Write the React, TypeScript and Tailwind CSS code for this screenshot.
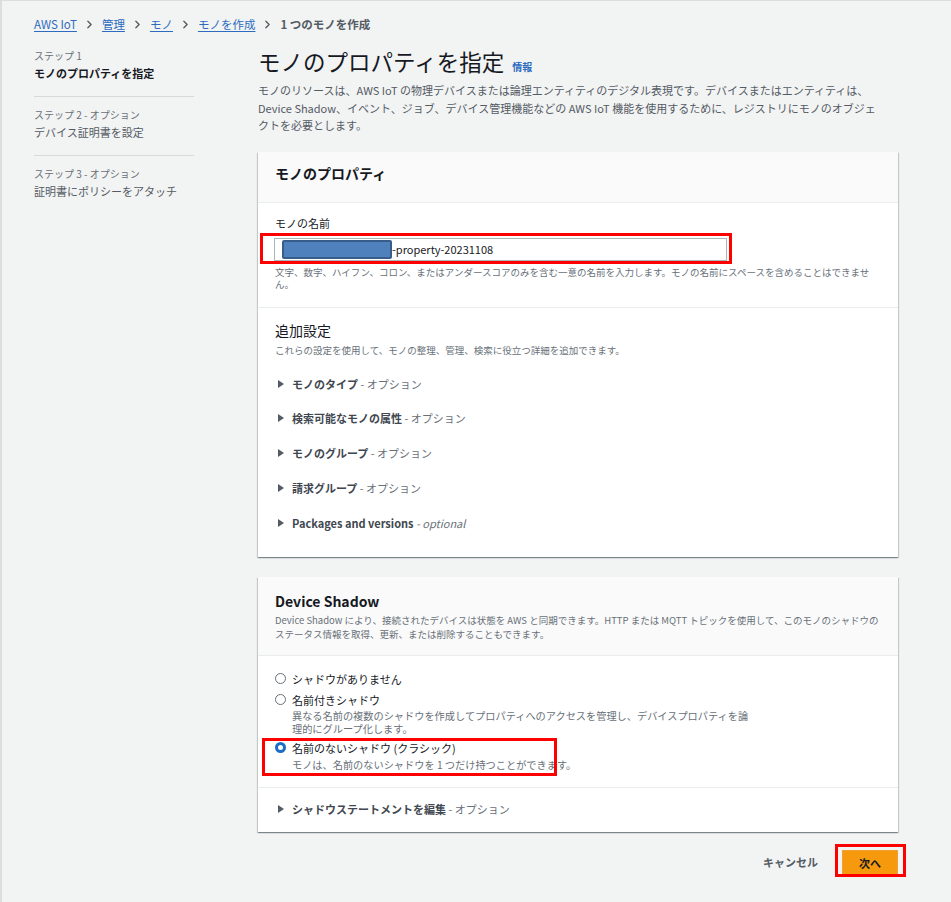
import { ChevronRight } from "lucide-react"

const crumbs = ["AWS IoT", "管理", "モノ", "モノを作成"]

const steps = [
    { step: "ステップ 1", title: "モノのプロパティを指定", active: true },
    { step: "ステップ 2 - オプション", title: "デバイス証明書を設定", active: false },
    { step: "ステップ 3 - オプション", title: "証明書にポリシーをアタッチ", active: false },
]

const extras = [
    { label: "モノのタイプ", note: "オプション", italic: false },
    { label: "検索可能なモノの属性", note: "オプション", italic: false },
    { label: "モノのグループ", note: "オプション", italic: false },
    { label: "請求グループ", note: "オプション", italic: false },
    { label: "Packages and versions", note: "optional", italic: true },
]

function Caret() {
    return <span className="w-0 h-0 border-y-[4px] border-y-transparent border-l-[6px] border-l-[#545b64] shrink-0" />
}

function ExpandRow({ label, note, italic }: { label: string; note: string; italic: boolean }) {
    return (
        <div className="flex items-center gap-[8px] pl-[3px] h-[16px] text-[11px] leading-[16px]">
            <Caret />
            <span>
                <span className="font-bold text-[#414750]">{label}</span>
                <span className={`text-[#687078] ${italic ? "italic" : ""}`}> - {note}</span>
            </span>
        </div>
    )
}

function Radio({ checked }: { checked?: boolean }) {
    return checked ? (
        <span className="mt-[3.5px] w-[11px] h-[11px] rounded-full border-[3.5px] border-[#1a6ec8] bg-white shrink-0" />
    ) : (
        <span className="mt-[3.5px] w-[11px] h-[11px] rounded-full border-[1.5px] border-[#687078] bg-white shrink-0" />
    )
}

const cardShadow =
    "shadow-[0_1px_1px_0_rgba(0,28,36,0.3),1px_1px_1px_0_rgba(0,28,36,0.15),-1px_1px_1px_0_rgba(0,28,36,0.15)]"

export default function App() {
    return (
        <div className="min-h-screen bg-[#f2f3f3] border-l-[2px] border-t border-[#dcdddd] pl-[32px] pt-[15px] font-['Noto_Sans_CJK_JP','Noto_Sans',sans-serif] text-[#16191f]">
            {/* Breadcrumb */}
            <nav className="flex items-center gap-[6px] h-[16px] text-[11.5px] leading-[16px]">
                {crumbs.map((c) => (
                    <span key={c} className="flex items-center gap-[6px]">
                        <a className="text-[#2c6bc0] underline underline-offset-2">{c}</a>
                        <ChevronRight className="w-[13px] h-[13px] text-[#545b64]" strokeWidth={2.5} />
                    </span>
                ))}
                <span className="font-bold text-[#545b64]">1 つのモノを作成</span>
            </nav>

            <div className="flex gap-[64px] mt-[15px]">
                {/* Steps sidebar */}
                <aside className="w-[160px] pt-[2px] shrink-0">
                    {steps.map((s, i) => (
                        <div
                            key={s.step}
                            className={`${i > 0 ? "pt-[11px]" : ""} ${i < steps.length - 1 ? "pb-[14px] border-b border-[#d5dbdb]" : ""}`}
                        >
                            <div className="text-[10px] leading-[14px] text-[#687078]">{s.step}</div>
                            <div
                                className={`mt-[1px] text-[11px] leading-[18px] ${s.active ? "font-bold text-[#16191f]" : "text-[#545b64]"}`}
                            >
                                {s.title}
                            </div>
                        </div>
                    ))}
                </aside>

                {/* Main column */}
                <main className="w-[640px]">
                    <div className="flex items-baseline gap-[8px]">
                        <h1 className="text-[22.5px] leading-[28px] font-normal text-[#16191f]">モノのプロパティを指定</h1>
                        <a className="text-[10px] font-bold text-[#2c6bc0]">情報</a>
                    </div>
                    <p className="mt-[7px] text-[11px] leading-[17.5px] text-[#545b64]">
                        モノのリソースは、AWS IoT の物理デバイスまたは論理エンティティのデジタル表現です。デバイスまたはエンティティは、Device Shadow、イベント、ジョブ、デバイス管理機能などの AWS IoT 機能を使用するために、レジストリにモノのオブジェ
                        <br />
                        クトを必要とします。
                    </p>

                    {/* Thing properties */}
                    <section className={`mt-[17px] bg-white ${cardShadow}`}>
                        <div className="bg-[#fafafa] border-b border-[#eaeded] h-[51px] px-[17px] pt-[11px]">
                            <h2 className="text-[14px] leading-[20px] font-bold">モノのプロパティ</h2>
                        </div>
                        <div className="px-[17px] pt-[12px] pb-[17px] border-b border-[#eaeded]">
                            <label className="block text-[11px] leading-[16px]">モノの名前</label>
                            <div className="relative mt-[7px] w-[453px] -ml-[1px]">
                                <div className="h-[23px] border border-[#aab7b8] bg-white flex items-center pl-[7px]">
                                    <span className="w-[110px] h-[19px] bg-[#4f81bd] border-2 border-[#385d8a] rounded-[2px]" />
                                    <span className="text-[11px] leading-[16px] text-[#16191f]">-property-20231108</span>
                                </div>
                                <div className="absolute -left-[14px] -top-[5px] w-[472px] h-[31px] border-[3px] border-[#ff0000] pointer-events-none" />
                            </div>
                            <p className="mt-[5px] text-[9.5px] leading-[12px] text-[#687078]">
                                文字、数字、ハイフン、コロン、またはアンダースコアのみを含む一意の名前を入力します。モノの名前にスペースを含めることはできません。
                            </p>
                        </div>
                        <div className="px-[17px] pt-[12px] pb-[26px]">
                            <h3 className="text-[14px] leading-[20px] font-normal">追加設定</h3>
                            <p className="mt-[3px] text-[9.5px] leading-[14px] text-[#687078]">
                                これらの設定を使用して、モノの整理、管理、検索に役立つ詳細を追加できます。
                            </p>
                            <div className="mt-[19px] flex flex-col gap-[18.75px]">
                                {extras.map((e) => (
                                    <ExpandRow key={e.label} {...e} />
                                ))}
                            </div>
                        </div>
                    </section>

                    {/* Device Shadow */}
                    <section className={`mt-[20px] bg-white ${cardShadow}`}>
                        <div className="bg-[#fafafa] border-b border-[#eaeded] px-[17px] pt-[14px] pb-[14px]">
                            <h2 className="text-[14px] leading-[20px] font-bold">Device Shadow</h2>
                            <p className="mt-[2px] text-[9.5px] leading-[14px] text-[#687078]">
                                Device Shadow により、接続されたデバイスは状態を AWS と同期できます。HTTP または MQTT トピックを使用して、このモノのシャドウのステータス情報を取得、更新、または削除することもできます。
                            </p>
                        </div>
                        <div className="px-[17px] pt-[14px] pb-[16px] border-b border-[#eaeded]">
                            <div className="flex gap-[6px]">
                                <Radio />
                                <span className="text-[11px] leading-[18px]">シャドウがありません</span>
                            </div>
                            <div className="flex gap-[6px] mt-[3px]">
                                <Radio />
                                <div>
                                    <div className="text-[11px] leading-[18px]">名前付きシャドウ</div>
                                    <p className="max-w-[462px] text-[10.2px] leading-[13px] text-[#687078]">
                                        異なる名前の複数のシャドウを作成してプロパティへのアクセスを管理し、デバイスプロパティを論理的にグループ化します。
                                    </p>
                                </div>
                            </div>
                            <div className="relative flex gap-[6px] mt-[4px]">
                                <Radio checked />
                                <div>
                                    <div className="text-[11px] leading-[18px]">名前のないシャドウ (クラシック)</div>
                                    <p className="mt-[1px] text-[10.2px] leading-[13px] text-[#687078]">
                                        モノは、名前のないシャドウを 1 つだけ持つことができます。
                                    </p>
                                </div>
                                <div className="absolute -left-[13px] -top-[1px] w-[295px] h-[38px] border-[3px] border-[#ff0000] pointer-events-none" />
                            </div>
                        </div>
                        <div className="px-[17px] pt-[13px] pb-[15px]">
                            <ExpandRow label="シャドウステートメントを編集" note="オプション" italic={false} />
                        </div>
                    </section>

                    {/* Footer actions */}
                    <div className="mt-[17px] flex items-center justify-end gap-[24px]">
                        <button className="text-[11px] font-bold text-[#545b64]">キャンセル</button>
                        <div className="relative">
                            <button className="w-[56px] h-[26px] bg-[#f7990c] border border-[#f0a030] text-[11px] font-bold text-[#16191f]">
                                次へ
                            </button>
                            <div className="absolute -left-[7px] -top-[5px] w-[71px] h-[33px] border-[3px] border-[#ff0000] pointer-events-none" />
                        </div>
                    </div>
                </main>
            </div>
        </div>
    )
}
